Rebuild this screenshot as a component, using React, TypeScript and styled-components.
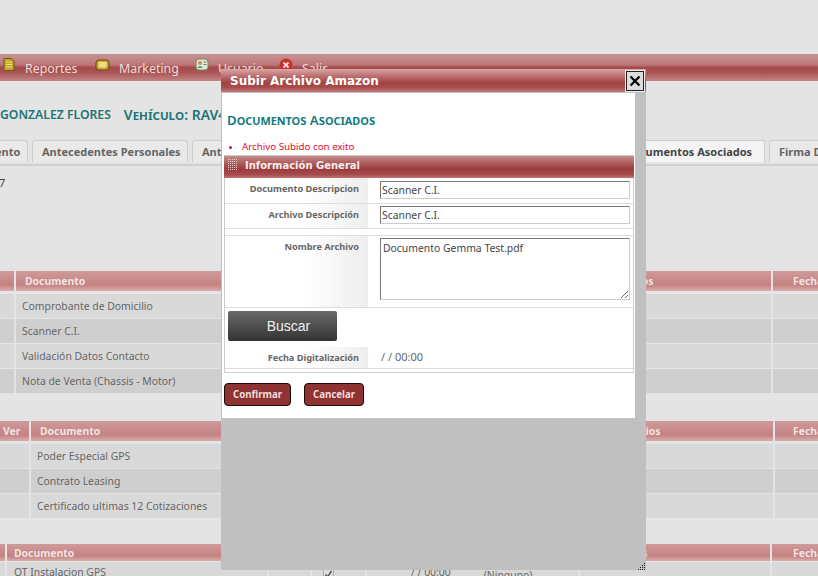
import React from 'react';
import styled, { createGlobalStyle } from 'styled-components';

const Global = createGlobalStyle`
  html, body { margin: 0; padding: 0; background: #e4e4e4; overflow: hidden; }
  * { box-sizing: border-box; }
`;

const sans = `"Noto Sans", "Open Sans", "Liberation Sans", sans-serif`;
const wide = `"DejaVu Sans", "Liberation Sans", sans-serif`;

const Page = styled.div`
  position: relative;
  width: 818px;
  height: 576px;
  overflow: hidden;
  background: #e4e4e4;
  font-family: ${sans};
  padding-top: 54px;
`;

const MenuBar = styled.div`
  height: 27px;
  display: flex;
  align-items: center;
  padding-left: 2px;
  background: linear-gradient(#c99494 0%, #bb7777 40%, #a54a4a 50%, #ab5757 70%, #c28484 100%);
`;

const MenuItem = styled.div<{ $w: number }>`
  width: ${p => p.$w}px;
  display: flex;
  align-items: center;
  gap: 9px;
  font-size: 12.4px;
  line-height: 16px;
  padding-top: 2px;
  color: #ecdcdc;
  svg { margin-top: -8px; flex: none; }
`;

const Patient = styled.div`
  height: 59px;
  padding-top: 25px;
  display: flex;
  gap: 13px;
  color: #1d7575;
  font-size: 12.2px;
  font-weight: 600;
  line-height: 18px;
`;

const Vehicle = styled.span`
  font-variant: small-caps;
  font-size: 14px;
`;

const TabBar = styled.div`
  height: 26px;
  width: 916px;
  margin-left: -60px;
  display: flex;
  gap: 4px;
  border-bottom: 2px solid #cfcfcf;
  padding-bottom: 3px;
`;

const Tab = styled.div<{ $active?: boolean; $w: number; $push?: boolean; $pad?: number }>`
  width: ${p => p.$w}px;
  height: 22px;
  flex: none;
  margin-left: ${p => (p.$push ? 'auto' : '0')};
  border: 1px solid #cfcfcf;
  border-bottom: none;
  border-radius: 3px 3px 0 0;
  background: ${p => (p.$active ? '#f4f4f4' : '#e9e9e9')};
  color: ${p => (p.$active ? '#444' : '#666')};
  font-family: ${sans};
  font-size: 11px;
  font-weight: 700;
  line-height: 22px;
  white-space: nowrap;
  overflow: hidden;
  padding-left: ${p => p.$pad ?? 9}px;
`;

const Count = styled.div`
  height: 105px;
  padding-top: 10px;
  margin-left: -1px;
  font-size: 11px;
  line-height: 14px;
  color: #444;
`;

const Section = styled.div<{ $top: number }>`
  margin-top: ${p => p.$top}px;
  display: flex;
  flex-direction: column;
`;

const HeadRow = styled.div<{ $cols: string; $h: number; $gap: number }>`
  display: grid;
  grid-template-columns: ${p => p.$cols};
  height: ${p => p.$h}px;
  margin-bottom: ${p => p.$gap}px;
  column-gap: 2px;
`;

const HeadCell = styled.div<{ $pad: number }>`
  background: linear-gradient(#d09a9a 0%, #c78787 55%, #c58383 70%, #d9acac 100%);
  color: #f0e2e2;
  font-size: 10.4px;
  font-weight: 700;
  line-height: 100%;
  display: flex;
  align-items: center;
  padding: 1px 0 0 ${p => p.$pad}px;
  white-space: nowrap;
  overflow: hidden;
`;

const BodyRow = styled.div<{ $cols: string }>`
  display: grid;
  grid-template-columns: ${p => p.$cols};
  height: 24px;
  margin-bottom: 1px;
  column-gap: 2px;
`;

const BodyCell = styled.div<{ $odd: boolean; $pad?: number; $lh: number }>`
  background: ${p => (p.$odd ? '#d9d9d9' : '#cfcfcf')};
  color: #666;
  font-size: 10.4px;
  line-height: ${p => p.$lh}px;
  padding-left: ${p => p.$pad ?? 0}px;
  white-space: nowrap;
  overflow: hidden;
`;

const NoneLabel = styled.span`
  display: inline-block;
  margin-left: 33px;
  transform: translateY(3px);
`;

const CheckMark = styled.div`
  width: 11px;
  height: 11px;
  margin: 7px 0 0 11px;
  border: 1px solid #aaa;
  background: #ddd;
  svg { display: block; }
`;

const Dialog = styled.div`
  position: absolute;
  left: 221px;
  top: 69px;
  width: 425px;
  height: 501px;
  background: #c0c0c0;
`;

const DialogTitle = styled.div`
  height: 23px;
  padding-left: 9px;
  display: flex;
  align-items: center;
  justify-content: space-between;
  background: linear-gradient(#d9a7a7 0%, #bd7070 30%, #a24242 60%, #a84c4c 80%, #bd7b7b 100%);
  color: #fff;
  font-family: ${wide};
  font-size: 12px;
  font-weight: 700;
`;

const CloseButton = styled.div`
  width: 18px;
  height: 20px;
  margin-right: 2px;
  border: 1px solid #222;
  outline: 1px solid #eee;
  background: #dcdcdc;
  display: flex;
  align-items: center;
  justify-content: center;
`;

const DialogBody = styled.div`
  width: 413px;
  height: 325px;
  margin: 1px 0 0 1px;
  background: #fff;
  padding: 17px 1px 0 2px;
`;

const DialogHeading = styled.div`
  color: #0e7b7b;
  font-size: 13.2px;
  font-weight: 600;
  font-variant: small-caps;
  line-height: 20px;
  padding-left: 3px;
`;

const Notice = styled.ul`
  margin: 10px 0 0;
  padding: 0 0 0 18px;
  color: #e00b30;
  font-size: 9.75px;
  line-height: 13px;
  height: 15px;
  li::marker { font-size: 9px; }
`;

const SectionBar = styled.div`
  height: 23px;
  border-top: 1px solid #ccc;
  display: flex;
  align-items: center;
  gap: 8px;
  padding: 0 0 3px 4px;
  background: linear-gradient(#c78a8a 0%, #ad5959 35%, #9c3c3c 60%, #a64c4c 85%, #bb7878 100%);
  color: #f7eeee;
  font-family: ${wide};
  font-size: 10px;
  font-weight: 700;
  svg { margin-top: -2px; }
`;

const FormBox = styled.div`
  width: 410px;
  height: 195px;
  border: 1px solid #ccc;
  border-top: none;
`;

const FormRow = styled.div<{ $h: number; $line?: boolean }>`
  height: ${p => p.$h}px;
  display: grid;
  grid-template-columns: 143px 1fr;
  border-bottom: ${p => (p.$line ? '1px solid #dedede' : 'none')};
`;

const FormLabel = styled.div`
  background: linear-gradient(90deg, #fff 55%, #eeeeee 100%);
  text-align: right;
  padding: 3px 9px 0 0;
  color: #666;
  font-size: 9.2px;
  font-weight: 700;
  line-height: 16px;
`;

const FormValue = styled.div<{ $top?: number }>`
  padding: ${p => p.$top ?? 3}px 0 0 12px;
`;

const TextField = styled.input`
  display: block;
  width: 250px;
  height: 18px;
  padding: 0 0 0 1px;
  border: 1px solid #ccc;
  border-top-color: #777;
  border-left-color: #777;
  color: #444;
  font-family: ${sans};
  font-size: 10.4px;
  background: #fff;
`;

const TextArea = styled.textarea`
  display: block;
  width: 250px;
  height: 62px;
  padding: 2px;
  border: 1px solid #ccc;
  border-top-color: #777;
  border-left-color: #777;
  color: #444;
  font-family: ${sans};
  font-size: 10.4px;
  background: #fff;
  resize: both;
`;

const Gap = styled.div<{ $h: number }>`
  height: ${p => p.$h}px;
  border-bottom: 1px solid #dedede;
`;

const SearchRow = styled.div`
  height: 39px;
  padding: 3px 0 0 3px;
`;

const SearchButton = styled.button`
  display: block;
  width: 109px;
  height: 30px;
  padding: 0 0 0 12px;
  border: none;
  border-radius: 2px;
  background: linear-gradient(#6a6a6a, #333);
  color: #eee;
  font-family: "Liberation Sans", sans-serif;
  font-size: 14px;
`;

const DateText = styled.div`
  padding: 1px 0 0 13px;
  color: #666;
  font-size: 11px;
  line-height: 18px;
`;

const Actions = styled.div`
  display: flex;
  gap: 13px;
  padding: 10px 0 0;
`;

const ActionButton = styled.button<{ $w: number }>`
  width: ${p => p.$w}px;
  height: 23px;
  padding: 0;
  border: 1px solid #1a0808;
  border-radius: 4px;
  background: #8e3232;
  color: #f0dddd;
  font-family: ${sans};
  font-size: 9.7px;
  font-weight: 700;
`;

const Resizer = styled.svg`
  position: absolute;
  right: 1px;
  bottom: 0;
`;

const ReportIcon = () => (
  <svg width="14" height="15" viewBox="0 0 14 15">
    <path d="M2 1.5h7l3 2.5v9.500H2z" fill="#c9a52c" stroke="#6f5a14" />
    <path d="M4 5h6M4 7.500h6M4 10h6" stroke="#f0dd88" />
  </svg>
);
const MarketIcon = () => (
  <svg width="15" height="12" viewBox="0 0 15 12">
    <rect x="1" y="1" width="13" height="10" rx="3" fill="#c9a52c" stroke="#5f4c10" />
    <rect x="3.500" y="3" width="8" height="5.500" rx="1" fill="#efdc85" />
  </svg>
);
const UserIcon = () => (
  <svg width="14" height="13" viewBox="0 0 14 13">
    <rect x="1" y="1" width="12" height="11" rx="3" fill="#dfe8d8" stroke="#6a8a60" />
    <circle cx="5" cy="5" r="2" fill="#d88a5a" />
    <path d="M2.500 10c.5-2.500 4.500-2.500 5 0z" fill="#4a9a4a" />
    <path d="M8.500 4h3M8.500 6.500h3" stroke="#5a8a5a" />
  </svg>
);
const ExitIcon = () => (
  <svg width="14" height="14" viewBox="0 0 14 14">
    <circle cx="7" cy="7" r="6.500" fill="#c9302c" />
    <path d="M4.500 4.500l5 5M9.500 4.500l-5 5" stroke="#f4dede" strokeWidth="1.800" />
  </svg>
);

const GripIcon = () => (
  <svg width="9" height="11" viewBox="0 0 9 11">
    {[0, 2, 4, 6, 8, 10].map(y => [0, 2, 4, 6, 8].map(x => (
      <rect key={`${x}-${y}`} x={x} y={y} width="1" height="1" fill="#e6c9c9" />
    )))}
  </svg>
);

type TableDef = {
  top: number;
  headH: number;
  headGap: number;
  lineH: number;
  cols: string;
  head: { text: string; pad: number }[];
  rows: string[][];
  pad: number[];
  check?: boolean;
};

const t1 = '14px 251px 41px 53px 212px 190px 60px';
const t2 = '29px 235px 41px 53px 221px 184px 60px';
const t3 = '5px 260px 41px 53px 211px 190px 60px';

const tables: TableDef[] = [
  {
    top: 0, headH: 20, headGap: 3, lineH: 24, cols: t1,
    head: [{ text: '', pad: 0 }, { text: 'Documento', pad: 9 }, { text: '', pad: 0 }, { text: '', pad: 0 }, { text: '', pad: 0 }, { text: 'Comentarios', pad: 6 }, { text: 'Fecha', pad: 20 }],
    pad: [0, 6, 0, 0, 0, 0, 0],
    rows: [
      ['', 'Comprobante de Domicilio', '', '', '', '', ''],
      ['', 'Scanner C.I.', '', '', '', '', ''],
      ['', 'Validación Datos Contacto', '', '', '', '', ''],
      ['', 'Nota de Venta (Chassis - Motor)', '', '', '', '', ''],
    ],
  },
  {
    top: 27, headH: 20, headGap: 3, lineH: 24, cols: t2,
    head: [{ text: 'Ver', pad: 3 }, { text: 'Documento', pad: 9 }, { text: '', pad: 0 }, { text: '', pad: 0 }, { text: '', pad: 0 }, { text: 'Comentarios', pad: 5 }, { text: 'Fecha', pad: 18 }],
    pad: [0, 6, 0, 0, 0, 0, 0],
    rows: [
      ['', 'Poder Especial GPS', '', '', '', '', ''],
      ['', 'Contrato Leasing', '', '', '', '', ''],
      ['', 'Certificado ultimas 12 Cotizaciones', '', '', '', '', ''],
    ],
  },
  {
    top: 25, headH: 17, headGap: 1, lineH: 20, cols: t3,
    head: [{ text: '', pad: 0 }, { text: 'Documento', pad: 7 }, { text: '', pad: 0 }, { text: '', pad: 0 }, { text: '', pad: 0 }, { text: 'Comentarios', pad: 1 }, { text: 'Fecha', pad: 21 }],
    pad: [0, 7, 0, 0, 44, 0, 0],
    check: true,
    rows: [['', 'OT Instalacion GPS', '', '', '', '', '']],
  },
];

export default function App() {
  return (
    <Page>
      <Global />
      <MenuBar>
        <MenuItem $w={93}><ReportIcon />Reportes</MenuItem>
        <MenuItem $w={100}><MarketIcon />Marketing</MenuItem>
        <MenuItem $w={84}><UserIcon />Usuario</MenuItem>
        <MenuItem $w={60}><ExitIcon />Salir</MenuItem>
      </MenuBar>
      <Patient>
        <span>GONZALEZ FLORES</span>
        <Vehicle>Vehículo: RAV4</Vehicle>
      </Patient>
      <TabBar>
        <Tab $w={88} $pad={3}>Conocimiento</Tab>
        <Tab $w={156}>Antecedentes Personales</Tab>
        <Tab $w={180}>Antecedentes</Tab>
        <Tab $w={150} $push $active>Documentos Asociados</Tab>
        <Tab $w={87}>Firma Digital</Tab>
      </TabBar>
      <Count>7</Count>
      {tables.map((t, ti) => (
        <Section key={ti} $top={t.top}>
          <HeadRow $cols={t.cols} $h={t.headH} $gap={t.headGap}>
            {t.head.map((h, i) => <HeadCell key={i} $pad={h.pad}>{h.text}</HeadCell>)}
          </HeadRow>
          {t.rows.map((r, ri) => (
            <BodyRow key={ri} $cols={t.cols}>
              {r.map((c, ci) => (
                <BodyCell key={ci} $odd={ri % 2 === 0} $pad={t.pad[ci]} $lh={t.lineH}>
                  {c}
                  {t.check && ci === 3 && (
                    <CheckMark>
                      <svg width="9" height="9" viewBox="0 0 9 9"><path d="M1.500 4.500l2 2.500 4-6" fill="none" stroke="#555" strokeWidth="1.500" /></svg>
                    </CheckMark>
                  )}
                  {t.check && ci === 4 && <>/ / 00:00<NoneLabel>(Ninguno)</NoneLabel></>}
                </BodyCell>
              ))}
            </BodyRow>
          ))}
        </Section>
      ))}
      <Dialog>
        <DialogTitle>
          Subir Archivo Amazon
          <CloseButton>
            <svg width="12" height="12" viewBox="0 0 12 12"><path d="M1.500 1.500l9 9M10.500 1.500l-9 9" stroke="#000" strokeWidth="2.200" /></svg>
          </CloseButton>
        </DialogTitle>
        <DialogBody>
          <DialogHeading>Documentos Asociados</DialogHeading>
          <Notice><li>Archivo Subido con exito</li></Notice>
          <SectionBar><GripIcon />Información General</SectionBar>
          <FormBox>
            <FormRow $h={26} $line>
              <FormLabel>Documento Descripcion</FormLabel>
              <FormValue><TextField readOnly value="Scanner C.I." /></FormValue>
            </FormRow>
            <FormRow $h={25} $line>
              <FormLabel>Archivo Descripción</FormLabel>
              <FormValue $top={2}><TextField readOnly value="Scanner C.I." /></FormValue>
            </FormRow>
            <Gap $h={7} />
            <FormRow $h={72} $line>
              <FormLabel>Nombre Archivo</FormLabel>
              <FormValue $top={2}><TextArea readOnly value="Documento Gemma Test.pdf" /></FormValue>
            </FormRow>
            <SearchRow><SearchButton>Buscar</SearchButton></SearchRow>
            <FormRow $h={22} $line>
              <FormLabel>Fecha Digitalización</FormLabel>
              <DateText>/ / 00:00</DateText>
            </FormRow>
          </FormBox>
          <Actions>
            <ActionButton $w={67}>Confirmar</ActionButton>
            <ActionButton $w={60}>Cancelar</ActionButton>
          </Actions>
        </DialogBody>
        <Resizer width="7" height="7" viewBox="0 0 7 7">
          <path d="M6 0h1v1H6zM4 2h1v1H4zM6 2h1v1H6zM2 4h1v1H2zM4 4h1v1H4zM6 4h1v1H6zM0 6h1v1H0zM2 6h1v1H2zM4 6h1v1H4zM6 6h1v1H6z" fill="#222" />
        </Resizer>
      </Dialog>
    </Page>
  );
}
